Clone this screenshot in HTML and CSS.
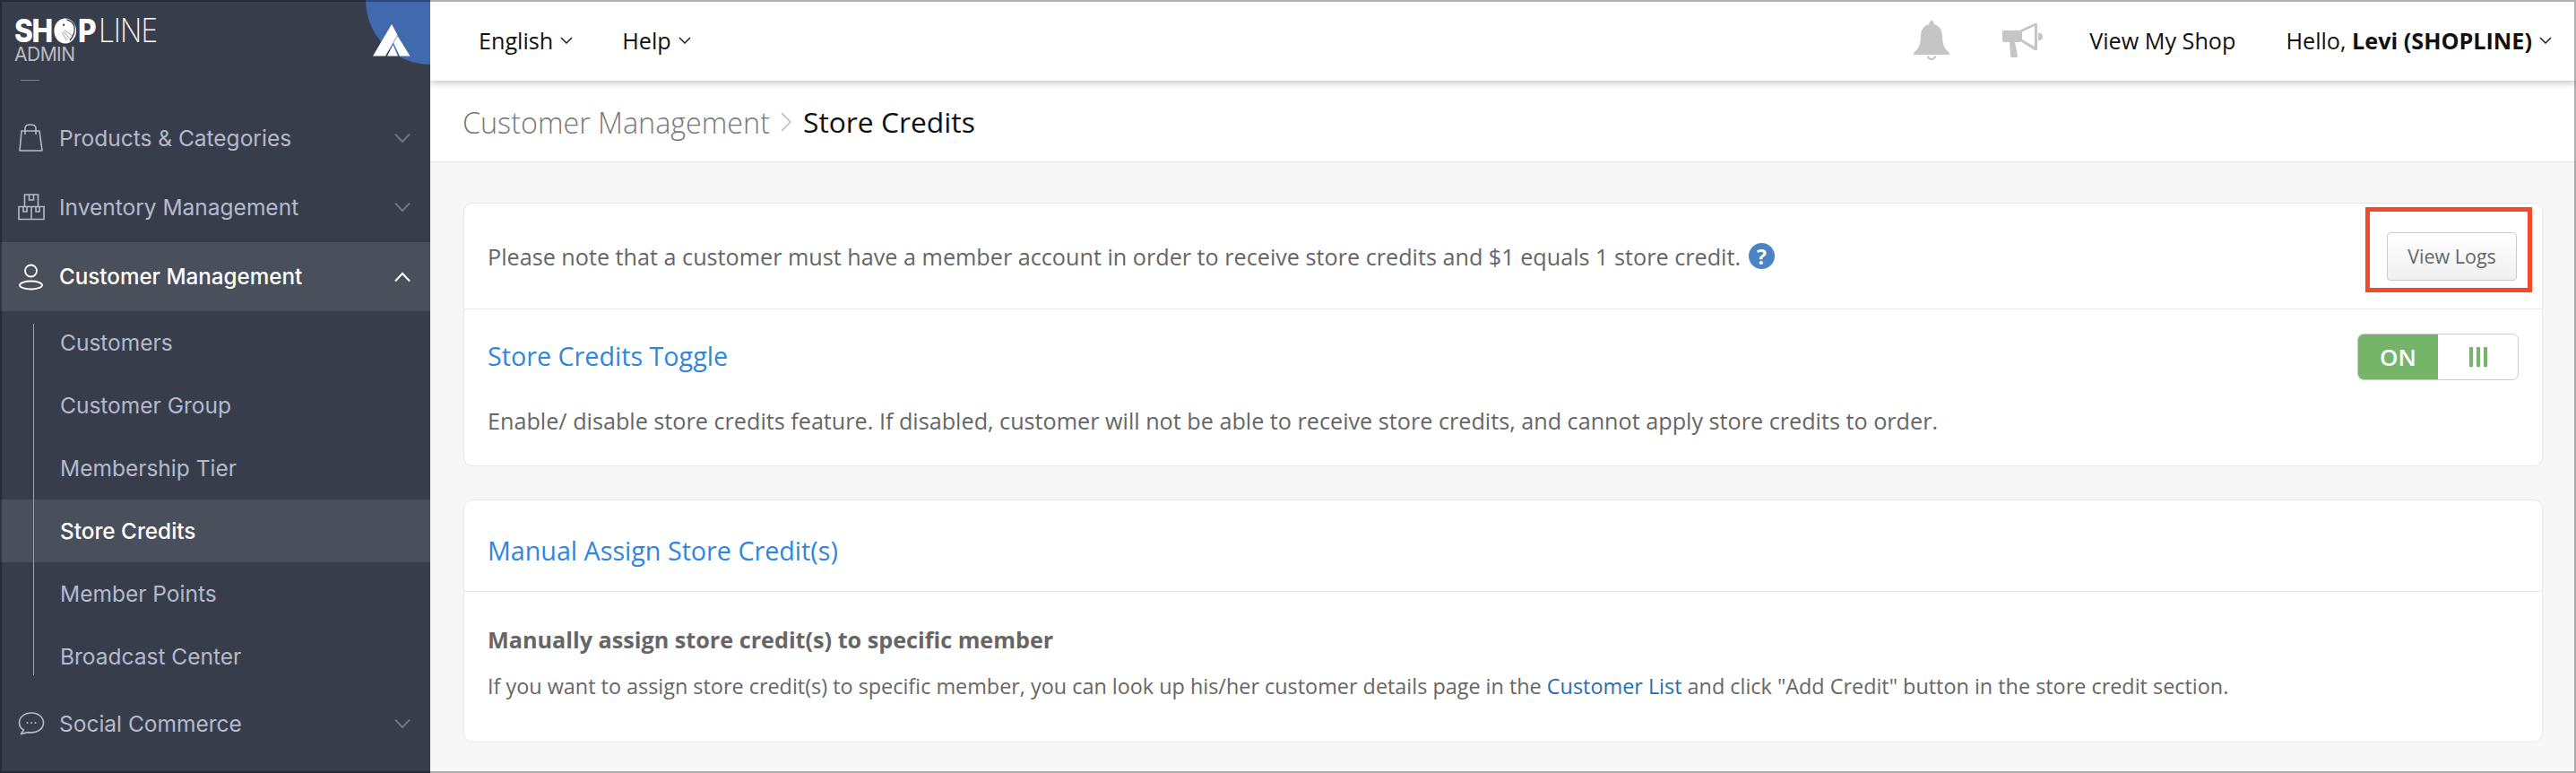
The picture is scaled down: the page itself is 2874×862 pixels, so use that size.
FILE: index.html
```html
<!DOCTYPE html>
<html lang="en">
<head>
<meta charset="utf-8">
<title>Store Credits</title>
<link rel="stylesheet" href="styles.css">
</head>
<body>
<div class="app">
  <aside class="sidebar">
    <div class="brand">
      <div class="logo"><b>SH</b><svg class="logo-o" viewBox="0 0 30 30"><circle cx="15" cy="15" r="14.500" fill="#fff"/><circle cx="13" cy="8" r="1.300" fill="#383d4c"/><path d="M12 15 L21 24 M14 14 L25 21 M11 17 L17 26" stroke="#8d919c" stroke-width="1"/><path d="M17 2 C22 3 26 6 27 10 C28 15 26 21 21 26" fill="none" stroke="#383d4c" stroke-width="1.500"/></svg><b>P</b><span class="logo-thin">LINE</span></div>
      <div class="admin">ADMIN</div>
      <div class="dash"></div>
      <div class="corner">
        <svg viewBox="0 0 42 36"><path d="M21 0 L27.500 12 L14 35.500 H0 Z" fill="#fff"/><path d="M27.500 13 L41.500 35.500 H30 L23 21 Z" fill="#fff"/><path d="M22.500 23 L28 35.500 H16 Z" fill="#fff"/></svg>
      </div>
    </div>
    <nav>
      <a class="nav-row">
        <svg class="nav-icon" viewBox="0 0 30 32"><path d="M4 8 H24 L27 30 H2 Z M8 12 V5 Q8 1 14 1 Q20 1 20 5 V12" fill="none" stroke="#b5bacb" stroke-width="1.600" stroke-linejoin="round"/></svg>
        <span class="nav-label">Products &amp; Categories</span>
        <svg class="chev" viewBox="0 0 18 12"><path d="M1 1.500 L9 10 L17 1.500" fill="none" stroke="#6e7485" stroke-width="2"/></svg>
      </a>
      <a class="nav-row">
        <svg class="nav-icon" viewBox="0 0 30 30"><path d="M7.500 1 H22.500 V14.500 H7.500 Z M12.500 1 V7 H17.500 V1 M1 14.500 H29 V28.500 H1 Z M15 14.500 V28.500 M6 14.500 V20 H10 V14.500 M20 14.500 V20 H24 V14.500" fill="none" stroke="#b5bacb" stroke-width="1.600"/></svg>
        <span class="nav-label">Inventory Management</span>
        <svg class="chev" viewBox="0 0 18 12"><path d="M1 1.500 L9 10 L17 1.500" fill="none" stroke="#6e7485" stroke-width="2"/></svg>
      </a>
      <a class="nav-row active">
        <svg class="nav-icon" viewBox="0 0 30 30"><circle cx="14.500" cy="8" r="6.500" fill="none" stroke="#fff" stroke-width="1.800"/><ellipse cx="14.500" cy="24" rx="12.500" ry="4.500" fill="none" stroke="#fff" stroke-width="1.800"/></svg>
        <span class="nav-label">Customer Management</span>
        <svg class="chev" viewBox="0 0 18 12"><path d="M1 10.500 L9 2 L17 10.500" fill="none" stroke="#fff" stroke-width="2"/></svg>
      </a>
      <div class="sub-list">
        <a class="sub-row">Customers</a>
        <a class="sub-row">Customer Group</a>
        <a class="sub-row">Membership Tier</a>
        <a class="sub-row current">Store Credits</a>
        <a class="sub-row">Member Points</a>
        <a class="sub-row">Broadcast Center</a>
      </div>
      <a class="nav-row social">
        <svg class="nav-icon" viewBox="0 0 30 30"><path d="M15 3 C7 3 1.500 8 1.500 14 C1.500 17.500 3.500 20.500 6.500 22 L3.500 26.500 L11 24.600 C12.500 24.900 13.500 24.900 15 24.900 C23 24.900 28.500 20 28.500 14 C28.500 8 23 3 15 3 Z" fill="none" stroke="#b5bacb" stroke-width="1.600" stroke-linejoin="round"/><circle cx="10.500" cy="14" r="1" fill="#b5bacb"/><circle cx="15" cy="14" r="1" fill="#b5bacb"/><circle cx="19.500" cy="14" r="1" fill="#b5bacb"/></svg>
        <span class="nav-label">Social Commerce</span>
        <svg class="chev" viewBox="0 0 18 12"><path d="M1 1.500 L9 10 L17 1.500" fill="none" stroke="#6e7485" stroke-width="2"/></svg>
      </a>
    </nav>
  </aside>
  <div class="main">
    <header class="topbar">
      <div class="top-left">
        <span class="top-item">English<svg class="caret" viewBox="0 0 14 8"><path d="M1 1 L7 7 L13 1" fill="none" stroke="#222" stroke-width="1.500"/></svg></span>
        <span class="top-item">Help<svg class="caret" viewBox="0 0 14 8"><path d="M1 1 L7 7 L13 1" fill="none" stroke="#222" stroke-width="1.500"/></svg></span>
      </div>
      <div class="top-right">
        <svg class="bell" viewBox="0 0 40 44"><path d="M20 0 C18 0 17.500 2 17.500 4 C11 5.500 8 11 8 17 C8 26 6 31 0 36 V38 H40 V36 C34 31 32 26 32 17 C32 11 29 5.500 22.500 4 C22.500 2 22 0 20 0 Z M15 39.500 C15 42.500 17.500 44 20 44 C22.500 44 25 42.500 25 39.500 H22.800 C22.800 41 21.500 42 20 42 C18.500 42 17.200 41 17.200 39.500 Z" fill="#c5c5c5"/></svg>
        <svg class="horn" viewBox="0 0 45 38"><path d="M0 10 C0 8.500 1 8 2 8 H19 L36 0 H39 V30 H36 L20 20 V21 H14 L17 36 C17 37.500 16 38 15 38 H11 C10 38 9 37.500 9 36 L8 21 H2 C1 21 0 20.500 0 19 Z M22 9.500 V18 L36 26 V3 Z" fill-rule="evenodd" fill="#c5c5c5"/><path d="M40 11 C44 11 45 13 45 15 C45 17 44 19 40 19 Z" fill="#c5c5c5"/></svg>
        <span class="top-link">View My Shop</span>
        <span class="top-item hello">Hello,&nbsp;<b>Levi (SHOPLINE)</b><svg class="caret" viewBox="0 0 14 8"><path d="M1 1 L7 7 L13 1" fill="none" stroke="#222" stroke-width="1.500"/></svg></span>
      </div>
    </header>
    <div class="crumbs">
      <span class="crumb-parent">Customer Management</span>
      <svg class="crumb-sep" viewBox="0 0 12 22"><path d="M1 1 L11 11 L1 21" fill="none" stroke="#b5bacb" stroke-width="1.500"/></svg>
      <span class="crumb-current">Store Credits</span>
    </div>
    <main class="content">
      <section class="card">
        <div class="note-row">
          <p class="note">Please note that a customer must have a member account in order to receive store credits and $1 equals 1 store credit.<span class="help">?</span></p>
          <button class="btn">View Logs</button>
          <div class="callout"></div>
        </div>
        <div class="toggle-row">
          <div class="toggle-head">
            <h2 class="title toggle-title">Store Credits Toggle</h2>
            <div class="switch"><span class="switch-on">ON</span><span class="switch-off"><i></i><i></i><i></i></span></div>
          </div>
          <p class="desc">Enable/ disable store credits feature. If disabled, customer will not be able to receive store credits, and cannot apply store credits to order.</p>
        </div>
      </section>
      <section class="card">
        <div class="manual-head"><h2 class="title">Manual Assign Store Credit(s)</h2></div>
        <div class="manual-body">
          <h3 class="sub-title">Manually assign store credit(s) to specific member</h3>
          <p class="small">If you want to assign store credit(s) to specific member, you can look up his/her customer details page in the <a class="link">Customer List</a> and click "Add Credit" button in the store credit section.</p>
        </div>
      </section>
    </main>
  </div>
</div>
<div class="frame"></div>
</body>
</html>
```
FILE: styles.css
```css
* { box-sizing: border-box; }
html, body { margin: 0; height: 862px; overflow: hidden; }
body { font-family: "Open Sans", sans-serif; color: #666; background: #f7f7f7; }
h2, h3, p { margin: 0; font-weight: normal; }
.app { display: flex; height: 862px; }
.frame { position: fixed; inset: 0; border: 2px solid rgba(0,0,0,.31); pointer-events: none; z-index: 5; }

.sidebar { width: 480px; flex: none; background: #383d4c; font-family: Inter, sans-serif; position: relative; z-index: 2; }
.brand { height: 116px; padding: 19px 0 0 16px; position: relative; overflow: hidden; }
.logo { display: flex; align-items: center; height: 30px; font-size: 36px; line-height: 30px; color: #fff; letter-spacing: -1.500px; transform: scaleX(.88); transform-origin: left center; }
.logo b { font-weight: 800; }
.logo-o { width: 29px; height: 29px; margin: 0 2px; flex: none; }
.logo-thin { font-weight: 200; letter-spacing: -1px; margin-left: 4px; }
.admin { font-size: 21px; line-height: 24px; color: #bcbcbc; letter-spacing: -.5px; }
.dash { width: 21px; height: 1px; background: #7b7f8a; margin: 16px 0 0 7px; }
.corner { position: absolute; top: -72px; right: -72px; width: 144px; height: 144px; border-radius: 50%; background: #4169ae; }
.corner svg { position: absolute; left: 8px; top: 99px; width: 42px; height: 36px; }

.nav-row { display: flex; align-items: center; height: 77px; padding: 0 22px 2px 20px; color: #b5bacb; font-size: 24.500px; }
.nav-row.active { background: #4a4f5c; color: #fff; font-weight: 500; font-size: 24.200px; padding-bottom: 0; }
.nav-row.social { margin-top: 1px; padding-bottom: 0; }
.nav-icon { width: 30px; height: 32px; flex: none; margin-right: 16px; }
.nav-label { flex: 1; }
.chev { width: 18px; height: 12px; flex: none; }
.sub-list { position: relative; }
.sub-list::before { content: ""; position: absolute; left: 37px; top: 14px; bottom: 14px; width: 1px; background: #9da2b1; }
.sub-row { display: flex; align-items: center; height: 70px; padding-left: 67px; color: #b5bacb; font-size: 24.500px; }
.sub-row.current { background: #4a4f5c; color: #fff; font-weight: 500; font-size: 24.300px; }

.main { flex: 1; min-width: 0; display: flex; flex-direction: column; }
.topbar { height: 90px; flex: none; background: #fff; display: flex; justify-content: space-between; align-items: center; padding: 0 27px 0 54px; box-shadow: 0 2px 8px rgba(0,0,0,.25); position: relative; z-index: 1; color: #111; font-size: 25.200px; }
.top-left, .top-right { display: flex; align-items: center; }
.top-left { gap: 55px; }
.top-item { display: flex; align-items: center; }
.caret { width: 14px; height: 8px; margin-left: 8px; flex: none; }
.bell { width: 40px; height: 44px; margin-right: 59px; }
.horn { width: 45px; height: 38px; margin-right: 52px; }
.top-link { margin-right: 56px; }
.hello b { font-weight: 700; }

.crumbs { height: 91px; flex: none; background: #fff; border-bottom: 1px solid #e6e6e6; display: flex; align-items: center; padding: 1px 0 0 36px; font-size: 32.300px; font-weight: 300; }
.crumb-parent { color: #777; }
.crumb-sep { width: 12px; height: 22px; margin: 0 13px 0 12px; }
.crumb-current { color: #111; font-weight: 400; font-size: 31.800px; }

.content { flex: 1; padding: 45px 37px 0; display: flex; flex-direction: column; gap: 37px; }
.card { background: #fff; border: 1px solid #e8e8e8; border-radius: 10px; }
.note-row { height: 118px; display: flex; align-items: center; justify-content: space-between; padding: 0 28px 0 26px; border-bottom: 1px solid #e6e6e6; position: relative; }
.note { font-size: 25.200px; display: flex; align-items: center; }
.help { width: 29px; height: 29px; flex: none; border-radius: 50%; background: #4a84c4; color: #fff; font-weight: 700; font-size: 23px; display: flex; align-items: center; justify-content: center; margin-left: 9px; }
.btn { width: 145px; height: 54px; border: 1px solid #ccc; border-radius: 4px; background: linear-gradient(#fff, #f0f0f0); color: #666; font: 21.500px "Open Sans", sans-serif; padding: 0; }
.callout { position: absolute; right: 11px; top: 4px; width: 186px; height: 95px; border: 5px solid #f0492b; }
.toggle-row { height: 174px; padding: 27px 26px 0; }
.toggle-head { display: flex; justify-content: space-between; align-items: flex-start; }
.title { font-size: 28.700px; color: #2f86de; line-height: 52px; }
.toggle-title { margin-top: -1px; }
.switch { display: flex; width: 180px; height: 52px; border: 1px solid #ccc; border-radius: 7px; overflow: hidden; }
.switch-on { width: 89px; background: #75b56a; color: #fff; font-weight: 600; font-size: 26px; display: flex; align-items: center; justify-content: center; }
.switch-off { flex: 1; display: flex; align-items: center; justify-content: center; gap: 4px; }
.switch-off i { width: 4px; height: 22px; background: #75b56a; }
.desc { font-size: 25.200px; margin-top: 28px; }
.manual-head { height: 102px; border-bottom: 1px solid #e6e6e6; padding: 10px 26px 0; display: flex; align-items: center; }
.manual-body { padding: 32px 26px 0; height: 167px; }
.sub-title { font-size: 25.200px; font-weight: 700; line-height: 42px; }
.small { font-size: 23.400px; margin-top: 15px; line-height: 32px; }
.link { color: #2a6db0; }
```
